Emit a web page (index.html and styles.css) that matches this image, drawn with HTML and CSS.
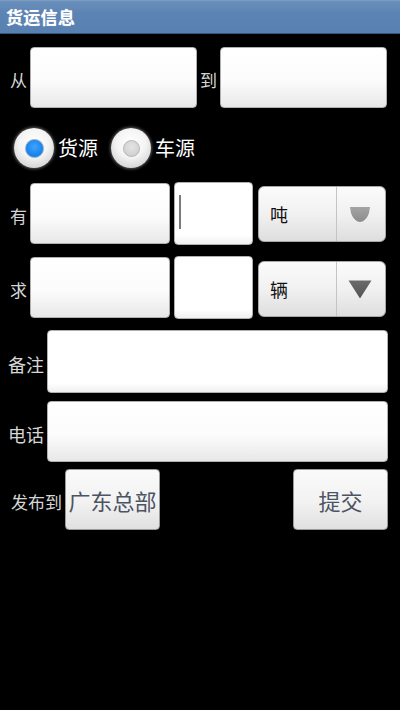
FILE: index.html
```html
<!DOCTYPE html>
<html lang="zh">
<head>
<meta charset="utf-8">
<title>货运信息</title>
<link rel="stylesheet" href="styles.css">
</head>
<body>
<div class="titlebar">货运信息</div>
<div class="form">
  <div class="row row-route">
    <span class="label">从</span>
    <div class="field f-route"></div>
    <span class="label label-mid">到</span>
    <div class="field f-route"></div>
  </div>

  <div class="row row-radio">
    <div class="radio on"><span class="dot"></span></div>
    <span class="radio-label">货源</span>
    <div class="radio off"><span class="dot"></span></div>
    <span class="radio-label">车源</span>
  </div>

  <div class="row row-qty">
    <span class="label">有</span>
    <div class="field f-name"></div>
    <div class="field f-num focus"><span class="cursor"></span></div>
    <div class="spinner">
      <span class="spin-text">吨</span>
      <span class="spin-btn">
        <svg width="20" height="15" viewBox="0 0 20 15">
          <defs>
            <linearGradient id="g1" x1="0" y1="0" x2="0" y2="1">
              <stop offset="0" stop-color="#a4a4a4"/>
              <stop offset="1" stop-color="#8c8c8c"/>
            </linearGradient>
          </defs>
          <path d="M0 0 H20 L19 6 C17 12 13 15 10 15 C7 15 3 12 1 6 Z" fill="url(#g1)"/>
        </svg>
      </span>
    </div>
  </div>

  <div class="row row-qty2">
    <span class="label">求</span>
    <div class="field f-name"></div>
    <div class="field f-num white"></div>
    <div class="spinner sp2">
      <span class="spin-text">辆</span>
      <span class="spin-btn">
        <svg width="24" height="19" viewBox="0 0 24 19">
          <defs>
            <linearGradient id="g2" x1="0" y1="0" x2="0" y2="1">
              <stop offset="0" stop-color="#6a6a6a"/>
              <stop offset="1" stop-color="#555"/>
            </linearGradient>
          </defs>
          <path d="M0.5 0.5 H23.5 L12 18.5 Z" fill="url(#g2)"/>
        </svg>
      </span>
    </div>
  </div>

  <div class="row row-note">
    <span class="label wide">备注</span>
    <div class="field f-full white"></div>
  </div>

  <div class="row row-phone">
    <span class="label wide">电话</span>
    <div class="field f-full"></div>
  </div>

  <div class="row row-publish">
    <span class="label pub">发布到</span>
    <div class="btn">广东总部</div>
    <div class="btn submit">提交</div>
  </div>
</div>
</body>
</html>
```

FILE: styles.css
```css
html, body {
  margin: 0;
  padding: 0;
  background: #000;
}
body {
  width: 400px;
  height: 710px;
  overflow: hidden;
  font-family: "Noto Sans CJK SC", "Noto Sans", sans-serif;
}
.titlebar {
  height: 34px;
  box-sizing: border-box;
  background: linear-gradient(to bottom, #6a8fbb 0%, #5b83b3 40%, #5880b0 100%);
  border-top: 1px solid #7c9cc4;
  border-bottom: 1px solid #35557d;
  color: #fff;
  font-weight: bold;
  font-size: 17px;
  line-height: 31px;
  padding-left: 6px;
  letter-spacing: 0.3px;
  text-shadow: 0 0 1px rgba(255,255,255,0.5);
}
.form {
  display: flex;
  flex-direction: column;
}
.row {
  display: flex;
  align-items: center;
}
.label {
  color: #d6d6d6;
  font-size: 17px;
  line-height: 20px;
  width: 17px;
  margin-left: 10px;
  flex: none;
  position: relative;
  top: 2px;
}
.label-mid {
  margin-left: 3px;
}
.label.wide {
  width: 36px;
  margin-left: 8px;
  font-size: 18px;
}
.label.pub {
  width: 51px;
  margin-left: 11px;
}
.field {
  box-sizing: border-box;
  border: 1px solid #b0b0b0;
  border-radius: 4px;
  background: linear-gradient(to bottom, #ffffff 0%, #fcfcfc 55%, #e8e8e8 100%);
  flex: none;
}
.field.white, .field.focus {
  background: linear-gradient(to bottom, #ffffff 0%, #ffffff 85%, #f0f0f0 100%);
}
.row-route {
  margin-top: 13px;
  height: 61px;
}
.f-route {
  width: 167px;
  height: 61px;
  margin-left: 3px;
}
.row-radio {
  margin-top: 20px;
  height: 40px;
  padding-left: 14px;
}
.radio {
  width: 40px;
  height: 40px;
  border-radius: 50%;
  box-sizing: border-box;
  background: radial-gradient(circle at 50% 38%, #ffffff 0%, #f4f4f4 45%, #d4d4d4 80%, #a8a8a8 100%);
  box-shadow: 0 0 3px 1px rgba(200,200,200,0.45);
  display: flex;
  align-items: center;
  justify-content: center;
  flex: none;
}
.radio .dot {
  width: 19px;
  height: 19px;
  border-radius: 50%;
  box-sizing: border-box;
}
.radio.on .dot {
  background: radial-gradient(circle at 50% 40%, #3ea4ff 0%, #1c86ee 60%, #1470d0 100%);
  border: 1px solid #8aa8c8;
}
.radio.off .dot {
  width: 17px;
  height: 17px;
  background: radial-gradient(circle at 50% 40%, #e4e4e4 0%, #d2d2d2 70%, #bcbcbc 100%);
  border: 1px solid #b5b5b5;
}
.radio-label {
  color: #fff;
  font-size: 20px;
  line-height: 24px;
  margin-left: 4px;
  width: 40px;
}
.radio.off {
  margin-left: 13px;
}
.row-qty {
  margin-top: 14px;
  height: 63px;
}
.row-qty2 {
  margin-top: 11px;
  height: 63px;
}
.f-name {
  width: 140px;
  height: 61px;
  margin-left: 3px;
}
.f-num {
  width: 79px;
  height: 63px;
  margin-left: 4px;
  position: relative;
}
.cursor {
  position: absolute;
  left: 4px;
  top: 12px;
  width: 2px;
  height: 34px;
  background: #7a7a7a;
}
.spinner {
  width: 128px;
  height: 56px;
  margin-left: 5px;
  box-sizing: border-box;
  border: 1px solid #a8a8a8;
  border-radius: 6px;
  background: linear-gradient(to bottom, #fbfbfb 0%, #f1f1f1 50%, #dedede 100%);
  display: flex;
  align-items: stretch;
  flex: none;
}
.sp2 {
  margin-top: 2px;
}
.spin-text {
  width: 78px;
  border-right: 1px solid #c4c4c4;
  box-sizing: border-box;
  padding-left: 11px;
  font-size: 18px;
  color: #111;
  display: flex;
  align-items: center;
}
.spin-btn {
  flex: 1;
  display: flex;
  align-items: center;
  justify-content: center;
  padding-right: 2px;
  padding-top: 2px;
}
.row-note {
  margin-top: 11px;
  height: 63px;
}
.f-full {
  width: 341px;
  height: 63px;
  margin-left: 3px;
}
.row-phone {
  margin-top: 8px;
  height: 61px;
}
.row-phone .f-full {
  height: 61px;
}
.row-publish {
  margin-top: 7px;
  height: 61px;
}
.btn {
  width: 95px;
  height: 61px;
  box-sizing: border-box;
  border: 1px solid #9a9a9a;
  border-radius: 4px;
  background: linear-gradient(to bottom, #fafafa 0%, #f2f2f2 55%, #e0e0e0 100%);
  color: #4c5363;
  font-size: 22px;
  display: flex;
  align-items: center;
  justify-content: center;
  margin-left: 3px;
  flex: none;
  white-space: nowrap;
}
.btn.submit {
  margin-left: auto;
  margin-right: 12px;
}
```
